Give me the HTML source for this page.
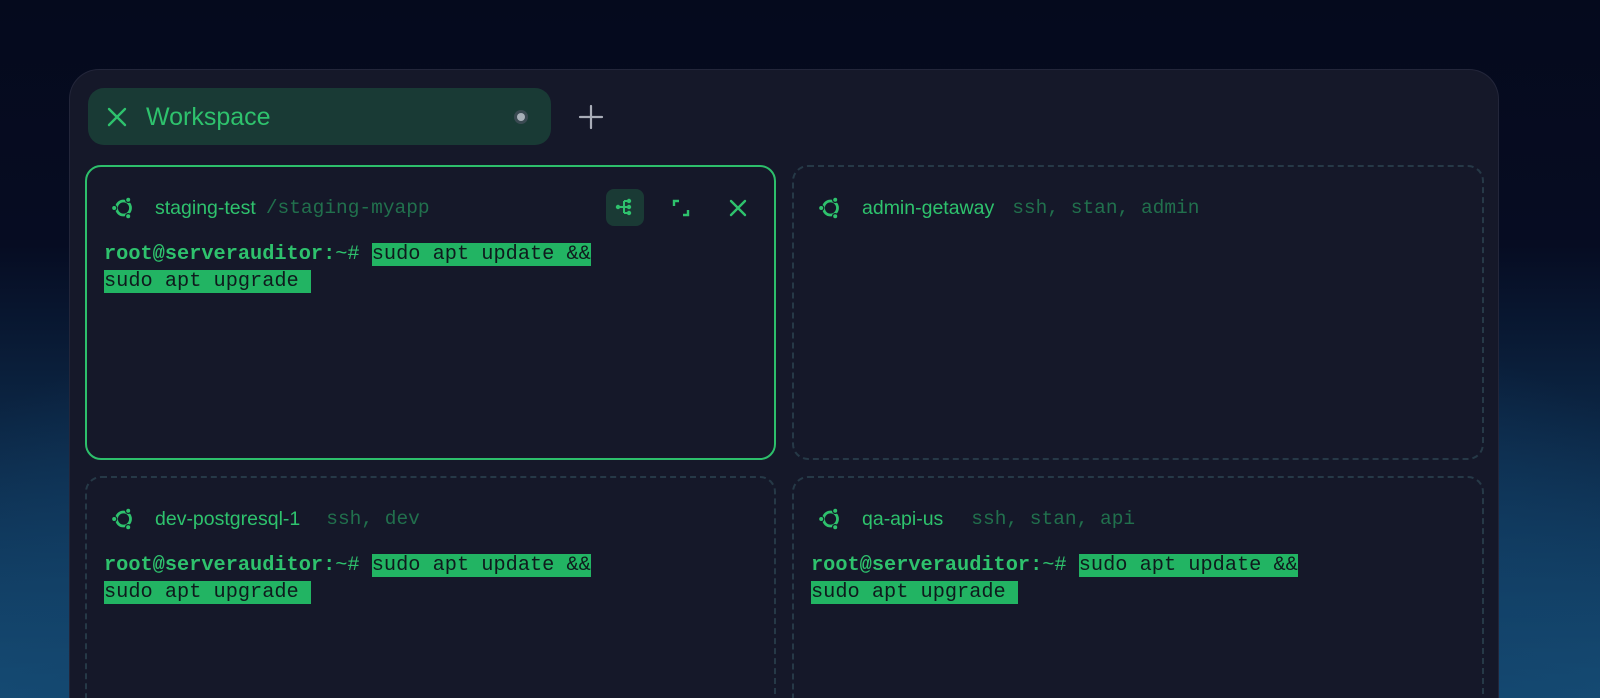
<!DOCTYPE html>
<html><head><meta charset="utf-8"><style>
*{margin:0;padding:0;box-sizing:border-box}
html,body{width:1600px;height:698px;overflow:hidden}
body{position:relative;font-family:"Liberation Sans",sans-serif;
background:radial-gradient(ellipse 1100px 520px at 50% 760px,#1a5a86 0%,#12426a 40%,rgba(10,30,60,0) 100%),linear-gradient(#050a1d 0%,#060c22 35%,#0f3558 75%,#175079 100%);}
#c{position:absolute;left:0;top:0;width:1600px;height:698px;overflow:hidden}
.win{position:absolute;left:69px;top:69px;width:1430px;height:629px;background:#151829;border-radius:30px 30px 0 0;border:1px solid #23263a;border-bottom:none}
.tab{position:absolute;left:88px;top:88px;width:463px;height:57px;background:#193a35;border-radius:16px;}
.tab .x{position:absolute;left:18px;top:18px}
.tab .t{position:absolute;left:58px;top:15px;font-size:25px;color:#2ec26d}
.plus{position:absolute;left:578px;top:104px}
.pane{position:absolute;border-radius:16px;}
.p1{left:85px;top:165px;width:691px;height:295px;border:2px solid #2dbf6b}
.pd{border:2px dashed #263947}
.p2{left:792px;top:165px;width:692px;height:295px}
.p3{left:85px;top:476px;width:691px;height:240px}
.p4{left:792px;top:476px;width:692px;height:240px}
.hd{position:absolute;height:26px;display:flex;align-items:center;white-space:nowrap}
.hd svg{margin-right:20px}
.hn{font-size:19.5px;color:#2ec26d}
.tg{font-family:"Liberation Mono",monospace;font-size:19.5px;color:#21704d}
.term{position:absolute;font-family:"Liberation Mono",monospace;font-size:20.3px;line-height:27px;color:#0f1a1d;white-space:pre}
.term b{color:#2ec26d}
.term .pr{color:#2ec26d}
.term i{font-style:normal;background:#22b463}
</style></head><body><div id="c">
<div class="win"></div>
<div class="tab">
<svg class="x" width="22" height="22" viewBox="0 0 22 22"><path d="M3 3L19 19M19 3L3 19" stroke="#2ec26d" stroke-width="2.4" stroke-linecap="round"/></svg>
<div class="t">Workspace</div>
</div>
<svg style="position:absolute;left:513px;top:109px" width="16" height="16"><circle cx="8" cy="8" r="7" fill="#3a4a52"/><circle cx="8" cy="8" r="4" fill="#a7b0b8"/></svg>
<svg class="plus" width="26" height="26" viewBox="0 0 26 26"><path d="M13 2V24M2 13H24" stroke="#a9adb8" stroke-width="2.2" stroke-linecap="round"/></svg>

<div class="pane p1"></div>
<div class="pane pd p2"></div>
<div class="pane pd p3"></div>
<div class="pane pd p4"></div>

<svg width="0" height="0" style="position:absolute"><defs><symbol id="ub" viewBox="0 0 24 24"><circle cx="12.5" cy="12" r="7" fill="none" stroke="#2ec26d" stroke-width="2.8"/><circle cx="3.2" cy="12" r="2.6" fill="#2ec26d" stroke="#151829" stroke-width="1.2"/><circle cx="17.2" cy="3.8" r="2.6" fill="#2ec26d" stroke="#151829" stroke-width="1.2"/><circle cx="17.2" cy="20.2" r="2.6" fill="#2ec26d" stroke="#151829" stroke-width="1.2"/></symbol></defs></svg>

<div class="hd" style="left:111px;top:195px"><svg width="24" height="24"><use href="#ub"/></svg><span class="hn">staging-test</span><span class="tg" style="margin-left:10px">/staging-myapp</span></div>
<div class="hd" style="left:818px;top:195px"><svg width="24" height="24"><use href="#ub"/></svg><span class="hn">admin-getaway</span><span class="tg" style="margin-left:18px">ssh, stan, admin</span></div>
<div class="hd" style="left:111px;top:506px"><svg width="24" height="24"><use href="#ub"/></svg><span class="hn">dev-postgresql-1</span><span class="tg" style="margin-left:26px">ssh, dev</span></div>
<div class="hd" style="left:818px;top:506px"><svg width="24" height="24"><use href="#ub"/></svg><span class="hn">qa-api-us</span><span class="tg" style="margin-left:28px">ssh, stan, api</span></div>

<div style="position:absolute;left:606px;top:189px;width:38px;height:37px;background:#1a3a35;border-radius:8px"></div>
<svg style="position:absolute;left:614px;top:196px" width="22" height="22" viewBox="0 0 22 22"><g fill="none" stroke="#2ec26d" stroke-width="2"><path d="M4 11H10M10 5V17M10 5H14M10 11H14M10 17H14"/></g><circle cx="4" cy="11" r="2.2" fill="#2ec26d"/><circle cx="15" cy="5" r="2.2" fill="#2ec26d"/><circle cx="15" cy="11" r="2.2" fill="#2ec26d"/><circle cx="15" cy="17" r="2.2" fill="#2ec26d"/></svg>
<svg style="position:absolute;left:671px;top:198px" width="20" height="20" viewBox="0 0 20 20"><path d="M3 8V3H8M17 12V17H12" fill="none" stroke="#2ec26d" stroke-width="2.4"/></svg>
<svg style="position:absolute;left:728px;top:198px" width="20" height="20" viewBox="0 0 20 20"><path d="M3 3L17 17M17 3L3 17" stroke="#2ec26d" stroke-width="2.4" stroke-linecap="round"/></svg>

<div class="term" style="left:104px;top:241px"><b>root@serverauditor:</b><span class="pr">~# </span><i>sudo apt update &amp;&amp;</i>
<i>sudo apt upgrade </i></div>
<div class="term" style="left:104px;top:552px"><b>root@serverauditor:</b><span class="pr">~# </span><i>sudo apt update &amp;&amp;</i>
<i>sudo apt upgrade </i></div>
<div class="term" style="left:811px;top:552px"><b>root@serverauditor:</b><span class="pr">~# </span><i>sudo apt update &amp;&amp;</i>
<i>sudo apt upgrade </i></div>
</div></body></html>
